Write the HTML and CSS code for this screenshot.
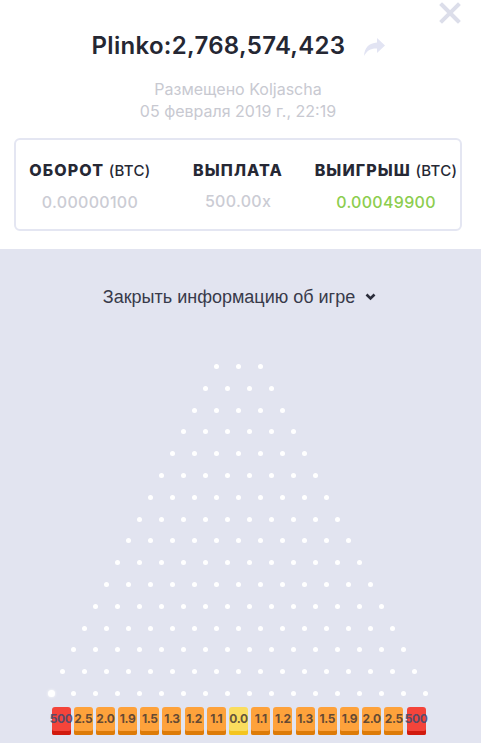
FILE: index.html
```html
<!DOCTYPE html>
<html lang="ru">

<head>
  <meta charset="UTF-8">
  <meta name="viewport" content="width=device-width, initial-scale=1.0">
  <title>Plinko bet</title>
  <link rel="stylesheet" href="styles.css">
</head>

<body>
  <div class="bet">
    <button class="close" aria-label="Закрыть">
      <svg width="22" height="22" viewBox="0 0 22 22">
        <path d="M3 3 L19 19 M19 3 L3 19" stroke="currentColor" stroke-width="4" stroke-linecap="square" />
      </svg>
    </button>

    <div class="title-row">
      <h1>Plinko:2,768,574,423</h1>
      <svg class="share" width="23" height="20" viewBox="0 0 23 20">
        <path d="M14 1 L22 8.5 L14 16 L14 11.5 C8 11.2 4 13.5 1 19 C1.5 10.5 6 6 14 5.5 Z" fill="currentColor" />
      </svg>
    </div>

    <div class="meta">
      <p>Размещено Koljascha</p>
      <p>05 февраля 2019 г., 22:19</p>
    </div>

    <div class="stats">
      <div class="stat">
        <div class="stat-label">ОБОРОТ <span>(BTC)</span></div>
        <div class="stat-value">0.00000100</div>
      </div>
      <div class="stat">
        <div class="stat-label">ВЫПЛАТА</div>
        <div class="stat-value">500.00x</div>
      </div>
      <div class="stat">
        <div class="stat-label">ВЫИГРЫШ <span>(BTC)</span></div>
        <div class="stat-value win">0.00049900</div>
      </div>
    </div>
  </div>

  <div class="game">
    <div class="toggle">
      Закрыть информацию об игре
      <svg width="11" height="8" viewBox="0 0 11 8">
        <path d="M1.5 1.5 L5.5 5.5 L9.5 1.5" fill="none" stroke="currentColor" stroke-width="2.6" />
      </svg>
    </div>

    <div class="board">
      <div id="pegs"></div>
      <div id="buckets" class="buckets"></div>
    </div>
  </div>

  <script>
    const rows = 16;
    const payouts = ['500', '2.5', '2.0', '1.9', '1.5', '1.3', '1.2', '1.1', '0.0',
      '1.1', '1.2', '1.3', '1.5', '1.9', '2.0', '2.5', '500'];

    const pegs = document.getElementById('pegs');
    for (let r = 0; r < rows; r++) {
      const row = document.createElement('div');
      row.className = 'peg-row';
      for (let i = 0; i < r + 3; i++) {
        const peg = document.createElement('span');
        peg.className = 'peg';
        // the ball sits on the first peg of the last row
        if (r === rows - 1 && i === 0) peg.className += ' ball';
        row.appendChild(peg);
      }
      pegs.appendChild(row);
    }

    const buckets = document.getElementById('buckets');
    payouts.forEach(function (p) {
      const b = document.createElement('div');
      b.className = 'bucket';
      if (p === '500') b.className += ' hot';
      if (p === '0.0') b.className += ' zero';
      b.textContent = p;
      buckets.appendChild(b);
    });
  </script>
</body>

</html>
```

FILE: styles.css
```css
body {
  margin: 0;
  font-family: Inter, "Noto Sans", sans-serif;
  background: #fff;
  color: #2b2d3b;
}

.bet {
  position: relative;
  padding: 0 19px 18px 14px;
}

.close {
  position: absolute;
  top: 2px;
  right: 20px;
  padding: 0;
  border: none;
  background: none;
  color: #dcdeea;
}

.title-row {
  display: flex;
  justify-content: center;
  align-items: center;
  gap: 18px;
  padding-top: 31px;
  padding-left: 2px;
}

h1 {
  margin: 0;
  font-size: 24px;
  font-weight: 600;
  line-height: 30px;
  letter-spacing: 0.3px;
  color: #252733;
}

.share {
  color: #e2e4f3;
  margin-top: 2px;
}

.meta {
  margin-top: 17px;
  text-align: center;
  color: #c8c9d1;
  font-size: 16px;
  line-height: 22px;
}

.meta p {
  margin: 0;
}

.stats {
  display: grid;
  grid-template-columns: repeat(3, 1fr);
  margin-top: 16px;
  border: 2px solid #e4e6f2;
  border-radius: 6px;
  box-sizing: border-box;
  height: 93px;
  padding-top: 20px;
}

.stat {
  text-align: center;
  white-space: nowrap;
}

.stat-label {
  font-size: 16px;
  font-weight: 800;
  letter-spacing: 1.1px;
  color: #262834;
  line-height: 20px;
}

.stat-label span {
  font-size: 15px;
  font-weight: 500;
  letter-spacing: 0.3px;
}

.stat-value {
  margin-top: 11px;
  font-size: 16px;
  font-weight: 500;
  letter-spacing: 0.3px;
  color: #cbccd4;
}

.stat-value.win {
  color: #8ccd4e;
}

.game {
  background: #e2e4f0;
  padding: 38px 4px 9px 0;
}

.toggle {
  display: flex;
  justify-content: center;
  align-items: center;
  gap: 10px;
  font-family: "Liberation Sans", Arial, sans-serif;
  font-size: 18px;
  color: #383a4a;
  line-height: 20px;
  padding-left: 2px;
}

.toggle svg {
  color: #2b2d3b;
}

.board {
  margin-top: 57px;
}

.peg-row {
  display: flex;
  justify-content: center;
  height: 21.8px;
}

.peg {
  width: 22px;
  display: flex;
  justify-content: center;
}

.peg::before {
  content: "";
  width: 5px;
  height: 5px;
  border-radius: 50%;
  background: #fff;
}

.ball::before {
  width: 7px;
  height: 7px;
  margin-top: -1px;
  box-shadow: 0 0 3px #fff;
}

.buckets {
  display: flex;
  justify-content: center;
  gap: 3.2px;
  margin-top: -6px;
}

.bucket {
  width: 19px;
  height: 24px;
  border-radius: 3px 3px 2px 2px;
  background: #fea23b;
  box-shadow: inset 0 -4px 0 #dd7b08;
  padding-bottom: 4px;
  display: flex;
  justify-content: center;
  align-items: center;
  font-size: 12px;
  font-weight: 700;
  letter-spacing: -0.4px;
  color: rgba(60, 50, 50, 0.8);
  white-space: nowrap;
}

.bucket.hot {
  background: #f4443a;
  box-shadow: inset 0 -4px 0 #d11a0e;
  color: rgba(70, 75, 110, 0.9);
}

.bucket.zero {
  background: #fadd5e;
  box-shadow: inset 0 -4px 0 #f4c520;
}
```
